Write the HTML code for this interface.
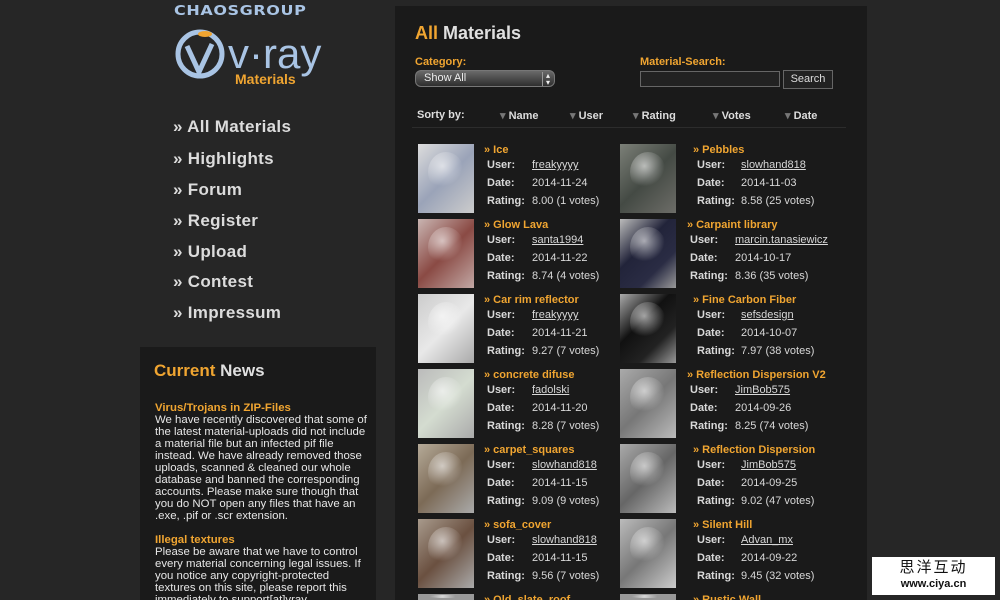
<!DOCTYPE html>
<html><head><meta charset="utf-8"><style>
*{margin:0;padding:0;box-sizing:border-box}
html,body{width:1000px;height:600px;overflow:hidden}
body{background:#262626;font-family:"Liberation Sans",sans-serif;position:relative}
.a{position:absolute;white-space:nowrap}
.or{color:#f0a531}
.nav{position:absolute;left:173px;color:#dcdcdc;font-size:17px;font-weight:bold;letter-spacing:.3px}
#main{position:absolute;left:395px;top:6px;width:472px;height:594px;background:#1a1a1a;overflow:hidden}
#news{position:absolute;left:140px;top:347px;width:236px;height:253px;background:#1a1a1a;overflow:hidden}
.t{position:absolute;font-size:11px;font-weight:bold;color:#f0a531}
.l{position:absolute;font-size:11px;font-weight:bold;color:#d8d8d8}
.v{position:absolute;font-size:11px;color:#d8d8d8}
.u{text-decoration:underline}
.th{position:absolute;width:56px;height:69px;overflow:hidden}
.th:after{content:"";position:absolute;left:18%;top:12%;width:64%;height:58%;border-radius:50%;background:radial-gradient(circle at 40% 35%,rgba(255,255,255,.6),rgba(0,0,0,0) 60%)}
#wrap{position:absolute;left:0;top:0;width:1000px;height:600px;overflow:hidden}
</style></head><body><div id="wrap">
<div class="a" style="left:174px;top:2px;font-size:16px;font-weight:bold;color:#a9c4e4;letter-spacing:0.6px;font-family:'DejaVu Sans',sans-serif;transform:scaleY(0.85);transform-origin:0 0">CHAOSGROUP</div>
<svg class="a" style="left:172px;top:26px" width="160" height="62" viewBox="0 0 160 62">
<circle cx="28" cy="28" r="22" fill="none" stroke="#a9c4e4" stroke-width="5"/>
<path d="M15 20 L27 46 L40 18" fill="none" stroke="#a9c4e4" stroke-width="5"/>
<ellipse cx="33" cy="8" rx="7" ry="3" fill="#f0a531"/>
<text x="56" y="42" font-family="Liberation Sans" font-size="42" fill="#a9c4e4">v·ray</text>
</svg>
<div class="a" style="left:235px;top:71px;font-size:14px;font-weight:bold;color:#f0a531">Materials</div>
<div class="nav" style="top:117px">» All Materials</div>
<div class="nav" style="top:149px">» Highlights</div>
<div class="nav" style="top:180px">» Forum</div>
<div class="nav" style="top:211px">» Register</div>
<div class="nav" style="top:242px">» Upload</div>
<div class="nav" style="top:272px">» Contest</div>
<div class="nav" style="top:303px">» Impressum</div>
<div id="news">
<div class="a" style="left:14px;top:14px;font-size:17px;font-weight:bold;color:#e0e0e0"><span class="or">Current</span> News</div>
<div class="a" style="left:15px;top:55px;width:212px;white-space:normal;font-size:11.4px;line-height:12px;color:#e6e6e6"><b class="or">Virus/Trojans in ZIP-Files</b><br>We have recently discovered that some of the latest material-uploads did not include a material file but an infected pif file instead. We have already removed those uploads, scanned &amp; cleaned our whole database and banned the corresponding accounts. Please make sure though that you do NOT open any files that have an .exe, .pif or .scr extension.<br><br><b class="or">Illegal textures</b><br>Please be aware that we have to control every material concerning legal issues. If you notice any copyright-protected textures on this site, please report this immediately to support[at]vray</div>
</div>
<div id="main">
<div class="a" style="left:20px;top:17px;font-size:18px;font-weight:bold;color:#e0e0e0"><span class="or">All</span> Materials</div>
<div class="a or" style="left:20px;top:50px;font-size:11px;font-weight:bold">Category:</div>
<div class="a" style="left:20px;top:64px;width:140px;height:17px;border-radius:6px;background:linear-gradient(#6a6a6a,#2e2e2e);border:1px solid #777;color:#eee;font-size:11px;padding:1px 8px">Show All<span style="position:absolute;right:4px;top:1px;font-size:8px;border-left:1px solid #999;padding-left:3px;line-height:7px">▴<br>▾</span></div>
<div class="a or" style="left:245px;top:50px;font-size:11px;font-weight:bold">Material-Search:</div>
<div class="a" style="left:245px;top:65px;width:140px;height:16px;background:#222;border:1px solid #666"></div>
<div class="a" style="left:388px;top:64px;width:50px;height:19px;background:#222;border:1px solid #666;color:#ddd;font-size:11px;text-align:center;line-height:17px">Search</div>
<div class="a" style="left:22px;top:103px;font-size:11px;font-weight:bold;color:#ddd">Sorty by:</div>
<div class="a" style="left:105px;top:103px;font-size:11px;font-weight:bold;color:#ddd"><span style="color:#777">▾</span> Name</div>
<div class="a" style="left:175px;top:103px;font-size:11px;font-weight:bold;color:#ddd"><span style="color:#777">▾</span> User</div>
<div class="a" style="left:238px;top:103px;font-size:11px;font-weight:bold;color:#ddd"><span style="color:#777">▾</span> Rating</div>
<div class="a" style="left:318px;top:103px;font-size:11px;font-weight:bold;color:#ddd"><span style="color:#777">▾</span> Votes</div>
<div class="a" style="left:390px;top:103px;font-size:11px;font-weight:bold;color:#ddd"><span style="color:#777">▾</span> Date</div>
<div class="a" style="left:17px;top:121px;width:434px;height:1px;background:#2c2c2c"></div>
</div>
<div class="th" style="left:418px;top:144px;background:linear-gradient(135deg,#ddd,#9aa3b8 50%,#ccc)"></div>
<div class="th" style="left:620px;top:144px;background:linear-gradient(135deg,#7c8078,#444a44 50%,#6d6d68)"></div>
<div class="th" style="left:418px;top:219px;background:linear-gradient(135deg,#c9b5b2,#8a4a44 50%,#c2a8a5)"></div>
<div class="th" style="left:620px;top:219px;background:linear-gradient(135deg,#bbb,#22243a 40%,#2a2c44 70%,#999)"></div>
<div class="th" style="left:418px;top:294px;background:linear-gradient(135deg,#ccc,#e8e8e8 50%,#aaa)"></div>
<div class="th" style="left:620px;top:294px;background:linear-gradient(135deg,#aaa,#111 40%,#222 70%,#999)"></div>
<div class="th" style="left:418px;top:369px;background:linear-gradient(135deg,#bbb,#d4dcd0 50%,#aaa)"></div>
<div class="th" style="left:620px;top:369px;background:linear-gradient(135deg,#aaa,#777 50%,#bbb)"></div>
<div class="th" style="left:418px;top:444px;background:linear-gradient(135deg,#b5aa98,#7c6a56 50%,#aaa)"></div>
<div class="th" style="left:620px;top:444px;background:linear-gradient(135deg,#aaa,#666 50%,#bbb)"></div>
<div class="th" style="left:418px;top:519px;background:linear-gradient(135deg,#a89a8c,#6a5040 50%,#aaa)"></div>
<div class="th" style="left:620px;top:519px;background:linear-gradient(135deg,#bbb,#777 50%,#ccc)"></div>
<div class="th" style="left:418px;top:594px;height:6px;background:#999"></div>
<div class="th" style="left:620px;top:594px;height:6px;background:#999"></div>

<div class="t" style="left:484px;top:144px">» Ice</div><div class="l" style="left:487px;top:159px">User:</div><div class="v u" style="left:532px;top:159px">freakyyyy</div><div class="l" style="left:487px;top:177px">Date:</div><div class="v" style="left:532px;top:177px">2014-11-24</div><div class="l" style="left:487px;top:195px">Rating:</div><div class="v" style="left:532px;top:195px">8.00 (1 votes)</div>
<div class="t" style="left:693px;top:144px">» Pebbles</div><div class="l" style="left:697px;top:159px">User:</div><div class="v u" style="left:741px;top:159px">slowhand818</div><div class="l" style="left:697px;top:177px">Date:</div><div class="v" style="left:741px;top:177px">2014-11-03</div><div class="l" style="left:697px;top:195px">Rating:</div><div class="v" style="left:741px;top:195px">8.58 (25 votes)</div>

<div class="t" style="left:484px;top:219px">» Glow Lava</div><div class="l" style="left:487px;top:234px">User:</div><div class="v u" style="left:532px;top:234px">santa1994</div><div class="l" style="left:487px;top:252px">Date:</div><div class="v" style="left:532px;top:252px">2014-11-22</div><div class="l" style="left:487px;top:270px">Rating:</div><div class="v" style="left:532px;top:270px">8.74 (4 votes)</div>
<div class="t" style="left:687px;top:219px">» Carpaint library</div><div class="l" style="left:690px;top:234px">User:</div><div class="v u" style="left:735px;top:234px">marcin.tanasiewicz</div><div class="l" style="left:690px;top:252px">Date:</div><div class="v" style="left:735px;top:252px">2014-10-17</div><div class="l" style="left:690px;top:270px">Rating:</div><div class="v" style="left:735px;top:270px">8.36 (35 votes)</div>

<div class="t" style="left:484px;top:294px">» Car rim reflector</div><div class="l" style="left:487px;top:309px">User:</div><div class="v u" style="left:532px;top:309px">freakyyyy</div><div class="l" style="left:487px;top:327px">Date:</div><div class="v" style="left:532px;top:327px">2014-11-21</div><div class="l" style="left:487px;top:345px">Rating:</div><div class="v" style="left:532px;top:345px">9.27 (7 votes)</div>
<div class="t" style="left:693px;top:294px">» Fine Carbon Fiber</div><div class="l" style="left:697px;top:309px">User:</div><div class="v u" style="left:741px;top:309px">sefsdesign</div><div class="l" style="left:697px;top:327px">Date:</div><div class="v" style="left:741px;top:327px">2014-10-07</div><div class="l" style="left:697px;top:345px">Rating:</div><div class="v" style="left:741px;top:345px">7.97 (38 votes)</div>

<div class="t" style="left:484px;top:369px">» concrete difuse</div><div class="l" style="left:487px;top:384px">User:</div><div class="v u" style="left:532px;top:384px">fadolski</div><div class="l" style="left:487px;top:402px">Date:</div><div class="v" style="left:532px;top:402px">2014-11-20</div><div class="l" style="left:487px;top:420px">Rating:</div><div class="v" style="left:532px;top:420px">8.28 (7 votes)</div>
<div class="t" style="left:687px;top:369px">» Reflection Dispersion V2</div><div class="l" style="left:690px;top:384px">User:</div><div class="v u" style="left:735px;top:384px">JimBob575</div><div class="l" style="left:690px;top:402px">Date:</div><div class="v" style="left:735px;top:402px">2014-09-26</div><div class="l" style="left:690px;top:420px">Rating:</div><div class="v" style="left:735px;top:420px">8.25 (74 votes)</div>

<div class="t" style="left:484px;top:444px">» carpet_squares</div><div class="l" style="left:487px;top:459px">User:</div><div class="v u" style="left:532px;top:459px">slowhand818</div><div class="l" style="left:487px;top:477px">Date:</div><div class="v" style="left:532px;top:477px">2014-11-15</div><div class="l" style="left:487px;top:495px">Rating:</div><div class="v" style="left:532px;top:495px">9.09 (9 votes)</div>
<div class="t" style="left:693px;top:444px">» Reflection Dispersion</div><div class="l" style="left:697px;top:459px">User:</div><div class="v u" style="left:741px;top:459px">JimBob575</div><div class="l" style="left:697px;top:477px">Date:</div><div class="v" style="left:741px;top:477px">2014-09-25</div><div class="l" style="left:697px;top:495px">Rating:</div><div class="v" style="left:741px;top:495px">9.02 (47 votes)</div>

<div class="t" style="left:484px;top:519px">» sofa_cover</div><div class="l" style="left:487px;top:534px">User:</div><div class="v u" style="left:532px;top:534px">slowhand818</div><div class="l" style="left:487px;top:552px">Date:</div><div class="v" style="left:532px;top:552px">2014-11-15</div><div class="l" style="left:487px;top:570px">Rating:</div><div class="v" style="left:532px;top:570px">9.56 (7 votes)</div>
<div class="t" style="left:693px;top:519px">» Silent Hill</div><div class="l" style="left:697px;top:534px">User:</div><div class="v u" style="left:741px;top:534px">Advan_mx</div><div class="l" style="left:697px;top:552px">Date:</div><div class="v" style="left:741px;top:552px">2014-09-22</div><div class="l" style="left:697px;top:570px">Rating:</div><div class="v" style="left:741px;top:570px">9.45 (32 votes)</div>

<div class="t" style="left:484px;top:594px">» Old_slate_roof</div>
<div class="t" style="left:693px;top:594px">» Rustic Wall</div>

<div class="a" style="left:872px;top:557px;width:123px;height:38px;background:#fff;text-align:center;color:#111">
<div style="font-family:'Liberation Sans','Noto Sans CJK SC',sans-serif;font-size:15px;line-height:18px;margin-top:2px;letter-spacing:2px">思洋互动</div>
<div style="font-size:11px;font-weight:bold;line-height:14px">www.ciya.cn</div></div>
</div></body></html>
